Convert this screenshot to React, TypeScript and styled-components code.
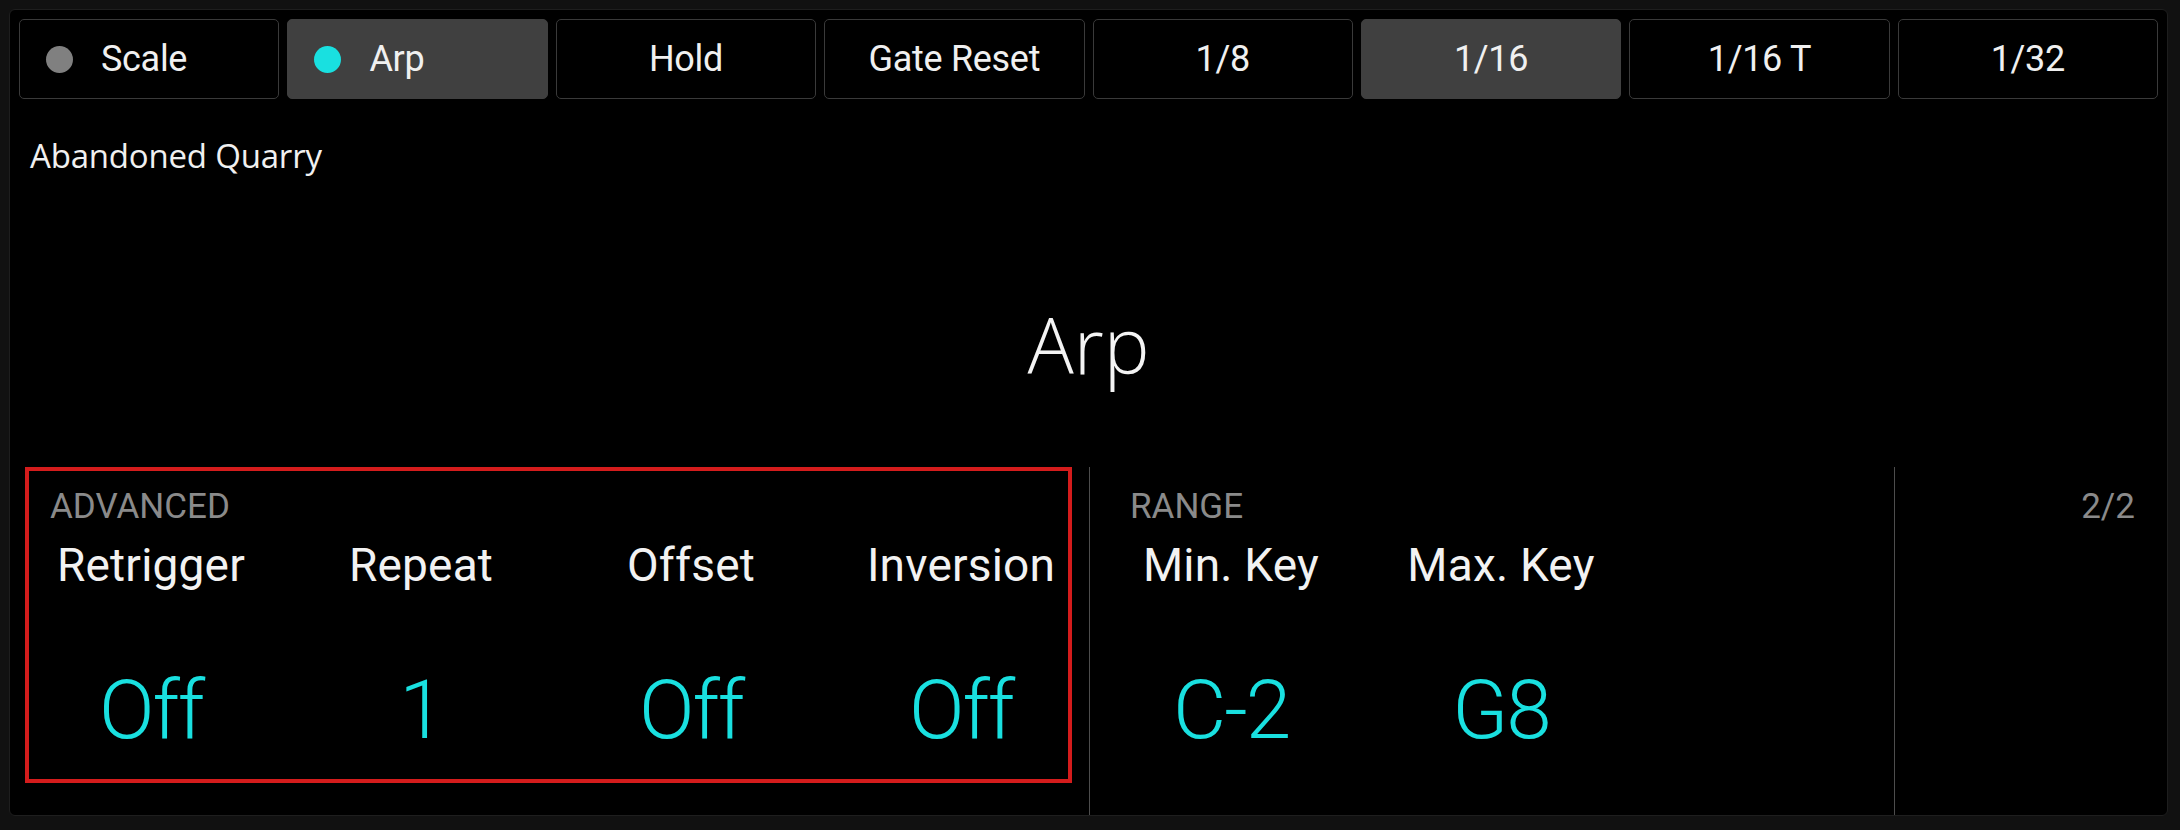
import styled, { createGlobalStyle } from "styled-components";

const GlobalStyle = createGlobalStyle`
    html, body {
        margin: 0;
        background: #111111;
    }

    body {
        font-family: Roboto, "Liberation Sans", sans-serif;
        color: #f0f0f0;
    }
`;

const Page = styled.div`
    padding: 9px 12px 14px 9px;
`;

const Panel = styled.main`
    display: flex;
    flex-direction: column;
    height: 807px;
    box-sizing: border-box;
    padding: 9px 9px 0 9px;
    background: #000000;
    border: 1px solid #1e1e1e;
    border-radius: 6px;
    overflow: hidden;
`;

const Toolbar = styled.nav`
    display: grid;
    grid-template-columns: repeat(8, 1fr);
    gap: 8px;
`;

const ToolButton = styled.button<{ $active?: boolean; $withDot?: boolean }>`
    display: flex;
    align-items: center;
    justify-content: ${(p) => (p.$withDot ? "flex-start" : "center")};
    gap: 28px;
    height: 80px;
    padding: 0 0 0 ${(p) => (p.$withDot ? "26px" : "0")};
    background: ${(p) => (p.$active ? "#404040" : "#000000")};
    border: 1px solid ${(p) => (p.$active ? "#404040" : "#3a3a3a")};
    border-radius: 5px;
    color: #f0f0f0;
    font-family: Roboto, sans-serif;
    font-size: 36px;
    letter-spacing: -0.3px;
`;

const Dot = styled.span<{ $color: string }>`
    width: 27px;
    height: 27px;
    border-radius: 50%;
    background: ${(p) => p.$color};
    flex-shrink: 0;
`;

const Middle = styled.section`
    flex: 1;
    display: flex;
    flex-direction: column;
`;

const PresetName = styled.div`
    margin: 40px 0 0 11px;
    font-family: "Open Sans", sans-serif;
    font-size: 33px;
    line-height: 1;
    letter-spacing: -0.2px;
    color: #f0f0f0;
`;

const PageTitle = styled.h1`
    margin: 134px 0 0 0;
    text-align: center;
    font-family: "Open Sans", sans-serif;
    font-weight: 300;
    font-size: 77px;
    line-height: 1;
    color: #f4f4f4;
`;

const Sections = styled.div`
    display: grid;
    grid-template-columns: 1079px 805px 1fr;
    height: 348px;
    margin: 0 -9px;
`;

const Section = styled.div<{ $divider?: boolean }>`
    position: relative;
    display: flex;
    flex-direction: column;
    padding: 22px 0 0 6px;
    border-left: ${(p) => (p.$divider ? "1px solid #4d4d4d" : "none")};
`;

const SectionLabel = styled.div`
    margin-left: 34px;
    font-size: 35px;
    line-height: 1;
    color: #8a8a8a;
`;

const PageCount = styled.div`
    align-self: flex-end;
    margin-right: 32px;
    font-size: 35px;
    line-height: 1;
    color: #8a8a8a;
`;

const Params = styled.div`
    display: grid;
    grid-auto-flow: column;
    grid-auto-columns: 270px;
    justify-content: start;
    margin-top: 18px;
`;

const Param = styled.div`
    display: flex;
    flex-direction: column;
    align-items: center;
`;

const ParamName = styled.span`
    font-size: 46px;
    line-height: 1;
    letter-spacing: 0.2px;
    color: #f2f2f2;
    white-space: nowrap;
`;

const ParamValue = styled.span`
    margin-top: 81px;
    font-size: 82px;
    font-weight: 300;
    line-height: 1;
    letter-spacing: -2px;
    color: #19e0e0;
    white-space: nowrap;
`;

const Selection = styled.div`
    position: absolute;
    top: 0;
    left: 15px;
    right: 17px;
    bottom: 32px;
    border: 4px solid #d41c1c;
    pointer-events: none;
`;

const buttons = [
    { label: "Scale", dot: "#808080" },
    { label: "Arp", dot: "#19e0e0", active: true },
    { label: "Hold" },
    { label: "Gate Reset" },
    { label: "1/8" },
    { label: "1/16", active: true },
    { label: "1/16 T" },
    { label: "1/32" },
];

const advanced = [
    { name: "Retrigger", value: "Off" },
    { name: "Repeat", value: "1" },
    { name: "Offset", value: "Off" },
    { name: "Inversion", value: "Off" },
];

const range = [
    { name: "Min. Key", value: "C-2" },
    { name: "Max. Key", value: "G8" },
];

export default function App() {
    return (
        <Page>
            <GlobalStyle />
            <Panel>
                <Toolbar>
                    {buttons.map((b) => (
                        <ToolButton key={b.label} $active={b.active} $withDot={!!b.dot}>
                            {b.dot && <Dot $color={b.dot} />}
                            {b.label}
                        </ToolButton>
                    ))}
                </Toolbar>

                <Middle>
                    <PresetName>Abandoned Quarry</PresetName>
                    <PageTitle>Arp</PageTitle>
                </Middle>

                <Sections>
                    <Section>
                        <SectionLabel>ADVANCED</SectionLabel>
                        <Params>
                            {advanced.map((p) => (
                                <Param key={p.name}>
                                    <ParamName>{p.name}</ParamName>
                                    <ParamValue>{p.value}</ParamValue>
                                </Param>
                            ))}
                        </Params>
                        <Selection />
                    </Section>

                    <Section $divider>
                        <SectionLabel>RANGE</SectionLabel>
                        <Params>
                            {range.map((p) => (
                                <Param key={p.name}>
                                    <ParamName>{p.name}</ParamName>
                                    <ParamValue>{p.value}</ParamValue>
                                </Param>
                            ))}
                        </Params>
                    </Section>

                    <Section $divider>
                        <PageCount>2/2</PageCount>
                    </Section>
                </Sections>
            </Panel>
        </Page>
    );
}
